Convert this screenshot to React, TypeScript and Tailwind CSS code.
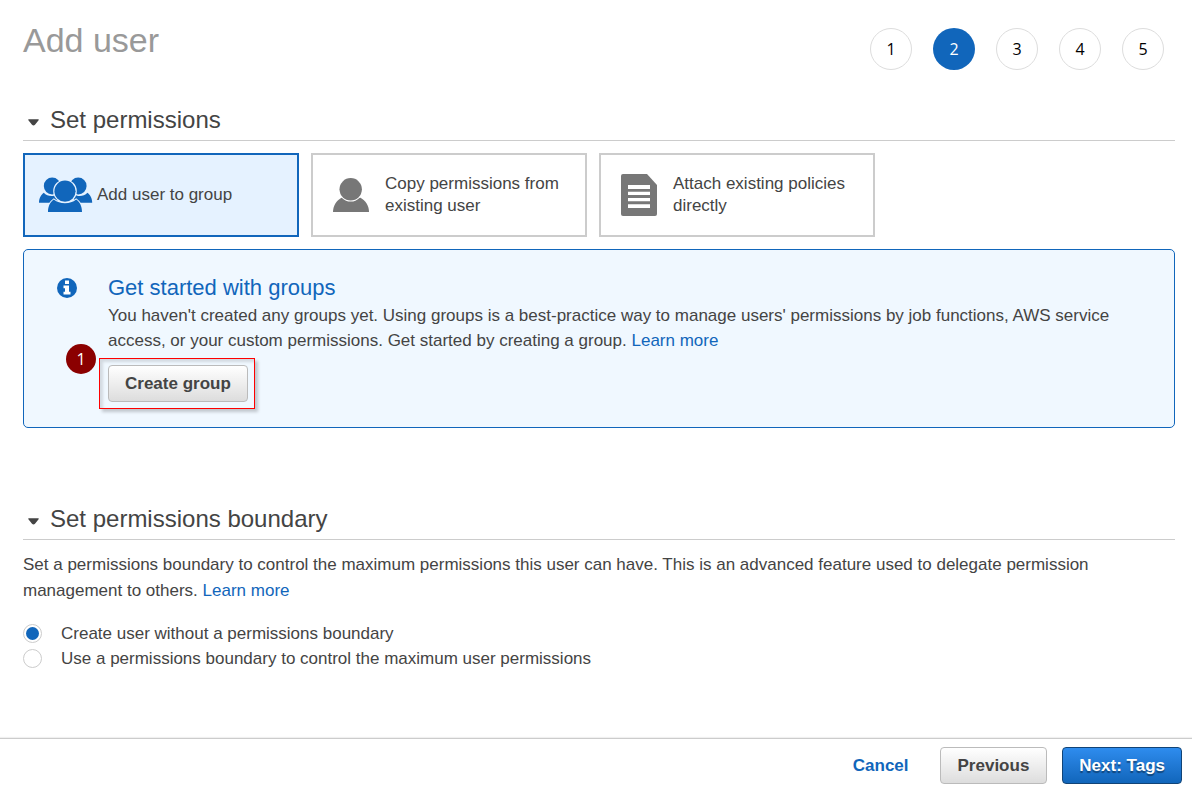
import { useState } from "react";

const steps = [1, 2, 3, 4, 5];
const currentStep = 2;

function GroupIcon() {
  return (
    <svg viewBox="0 0 54 36" className="h-9 w-[54px] shrink-0" fill="#1166bb" aria-hidden="true">
      <circle cx="13.2" cy="9" r="8.4" />
      <circle cx="39.200" cy="9" r="8.4" />
      <path d="M0 25.800c0-4.500 2.200-8.300 4.800-10c3.500 3.800 10 4.500 13.500 1v9z" />
      <path d="M53.200 25.800c0-4.500-2.200-8.300-4.800-10c-3.500 3.800-10 4.500-13.500 1v9z" />
      <path
        d="M9 35c0-5.500 2.200-10 5.800-12.400c6 5 16.400 5 22.400 0c3.600 2.400 5.800 6.900 5.800 12.400z"
        stroke="#e5f2ff"
        strokeWidth="2"
        paintOrder="stroke"
      />
      <circle cx="26" cy="14.200" r="10.600" stroke="#e5f2ff" strokeWidth="2.400" paintOrder="stroke" />
    </svg>
  );
}

function UserIcon() {
  return (
    <svg viewBox="0 0 36 36" className="size-9 shrink-0" fill="#777777" aria-hidden="true">
      <path d="M0 35c0-6.500 3.500-11.500 8.500-14.300h19c5 2.800 8.500 7.800 8.500 14.300z" />
      <circle cx="17.700" cy="12.300" r="11.200" stroke="#ffffff" strokeWidth="2.200" paintOrder="stroke" />
    </svg>
  );
}

function PolicyIcon() {
  return (
    <svg viewBox="0 0 36 42" className="h-[42px] w-9 shrink-0" aria-hidden="true">
      <path d="M2 0h24l10 11v29a2 2 0 0 1-2 2H2a2 2 0 0 1-2-2V2a2 2 0 0 1 2-2z" fill="#777777" />
      <path d="M7 11h22v4H7zM7 17.700h22v3.300H7zM7 24h22v3.300H7zM7 30.300h22v3.700H7z" fill="#ffffff" />
    </svg>
  );
}

function InfoIcon() {
  return (
    <svg viewBox="0 0 20 20" className="size-5 shrink-0" aria-hidden="true">
      <circle cx="10" cy="10" r="10" fill="#1166bb" />
      <path d="M8 2.500h4v3.600H8zM6.500 7.600H12v6.200h1.500v2.700h-7v-2.700H8v-3.500H6.500z" fill="#ffffff" />
    </svg>
  );
}

function SectionHeading({ title, open, onToggle }: { title: string; open: boolean; onToggle: () => void }) {
  return (
    <h2 className="border-b border-[#cccccc] pb-1 text-2xl">
      <button type="button" aria-expanded={open} onClick={onToggle} className="flex items-center gap-[11px] pl-[5px]">
        <svg viewBox="0 0 11 7" className="mt-1 h-[7px] w-[11px]" aria-hidden="true">
          <path d="M0.800 0.300h9.400q1 0.200 0.400 1L7 5.700q-1.500 1.500-3 0L0.400 1.300q-0.600-0.800 0.400-1z" fill="#444444" />
        </svg>
        {title}
      </button>
    </h2>
  );
}

const tileBase = "flex h-[84px] w-[276px] items-center border-2 text-left leading-[22px]";
const tileOn = "border-[#1166bb] bg-[#e5f2ff]";
const tileOff = "border-[#cccccc] bg-white";

const greyButton =
  "h-[37px] rounded-[4px] border border-[#bbbbbb] bg-linear-to-b from-white to-[#dddddd] font-bold text-[#444444]";

export default function App() {
  const [permissionsOpen, setPermissionsOpen] = useState(true);
  const [boundaryOpen, setBoundaryOpen] = useState(true);
  const [boundary, setBoundary] = useState("without");

  return (
    <div className="flex min-h-screen flex-col bg-white font-['Liberation_Sans',Arial,sans-serif] text-[17px] text-[#444444]">
      <main className="grow pr-[17px] pl-[23px]">
        <header className="flex justify-between pr-[11px]">
          <h1 className="pt-5 text-[34px] leading-10 text-[#999999]">Add user</h1>
          <ol className="flex gap-[21px] pt-7 font-['Open_Sans',sans-serif] text-base text-black">
            {steps.map((step) => (
              <li
                key={step}
                aria-current={step === currentStep ? "step" : undefined}
                className={
                  step === currentStep
                    ? "flex size-[42px] items-center justify-center rounded-full bg-[#1166bb] text-white"
                    : "flex size-[42px] items-center justify-center rounded-full border border-[#dddddd]"
                }
              >
                {step}
              </li>
            ))}
          </ol>
        </header>

        <section className="pt-[34px]">
          <SectionHeading
            title="Set permissions"
            open={permissionsOpen}
            onToggle={() => setPermissionsOpen(!permissionsOpen)}
          />
          {permissionsOpen && (
            <>
              <div className="flex flex-wrap gap-3 py-3">
                <button type="button" aria-pressed="true" className={`${tileBase} ${tileOn} gap-1 pl-[14px]`}>
                  <GroupIcon />
                  Add user to group
                </button>
                <button type="button" aria-pressed="false" className={`${tileBase} ${tileOff} gap-4 px-5`}>
                  <UserIcon />
                  Copy permissions from existing user
                </button>
                <button type="button" aria-pressed="false" className={`${tileBase} ${tileOff} gap-4 px-5`}>
                  <PolicyIcon />
                  Attach existing policies directly
                </button>
              </div>

              <div className="flex gap-[31px] rounded-[5px] border border-[#1166bb] bg-[#f0f8ff] pt-6 pr-8 pb-[18px] pl-[33px]">
                <div className="pt-1">
                  <InfoIcon />
                </div>
                <div>
                  <h3 className="pb-px text-[22px] leading-7 text-[#1166bb]">Get started with groups</h3>
                  <p className="leading-[25px]">
                    You haven't created any groups yet. Using groups is a best-practice way to manage users' permissions
                    by job functions, AWS service access, or your custom permissions. Get started by creating a group.{" "}
                    <a href="#groups" className="text-[#1166bb]">
                      Learn more
                    </a>
                  </p>
                  <div className="relative mt-[5px] -ml-[9px] w-fit border border-[#ff0000] py-[6px] pr-[6px] pl-2 shadow-[3px_3px_3px_rgba(0,0,0,0.2),inset_3px_3px_3px_rgba(0,0,0,0.12)]">
                    <span className="absolute -top-[15px] -left-[34px] flex size-[30px] items-center justify-center rounded-full bg-[#8b0000] font-['Open_Sans',sans-serif] text-base text-white">
                      1
                    </span>
                    <button type="button" className={`${greyButton} px-4`}>
                      Create group
                    </button>
                  </div>
                </div>
              </div>
            </>
          )}
        </section>

        <section className="pt-[75px]">
          <SectionHeading
            title="Set permissions boundary"
            open={boundaryOpen}
            onToggle={() => setBoundaryOpen(!boundaryOpen)}
          />
          {boundaryOpen && (
            <>
              <p className="pt-3 leading-[26px]">
                Set a permissions boundary to control the maximum permissions this user can have. This is an advanced
                feature used to delegate permission management to others.{" "}
                <a href="#boundary" className="text-[#1166bb]">
                  Learn more
                </a>
              </p>
              <fieldset aria-label="Permissions boundary" className="pt-[17px] leading-[25px]">
                {[
                  { value: "without", label: "Create user without a permissions boundary" },
                  { value: "with", label: "Use a permissions boundary to control the maximum user permissions" },
                ].map(({ value, label }) => (
                  <label key={value} className="flex w-fit items-center gap-[19px]">
                    <input
                      type="radio"
                      name="boundary"
                      value={value}
                      checked={boundary === value}
                      onChange={() => setBoundary(value)}
                      className="size-[19px] appearance-none rounded-full border border-[#cccccc] bg-white bg-clip-content p-[2px] checked:bg-[#1166bb]"
                    />
                    {label}
                  </label>
                ))}
              </fieldset>
            </>
          )}
        </section>
      </main>

      <footer className="flex items-center justify-end gap-[15px] border-t border-[#cccccc] pt-2 pr-[10px] pb-[6px] shadow-[0_-1px_1px_rgba(0,0,0,0.06)]">
        <button type="button" className="h-[37px] px-4 font-bold text-[#1166bb]">
          Cancel
        </button>
        <button type="button" className={`${greyButton} px-[17px]`}>
          Previous
        </button>
        <button
          type="button"
          className="h-[37px] rounded-[4px] border border-[#114477] bg-linear-to-b from-[#2e8cee] to-[#1166bb] px-4 font-bold text-white text-shadow-[0_2px_1px_rgba(0,0,0,0.4)]"
        >
          Next: Tags
        </button>
      </footer>
    </div>
  );
}
